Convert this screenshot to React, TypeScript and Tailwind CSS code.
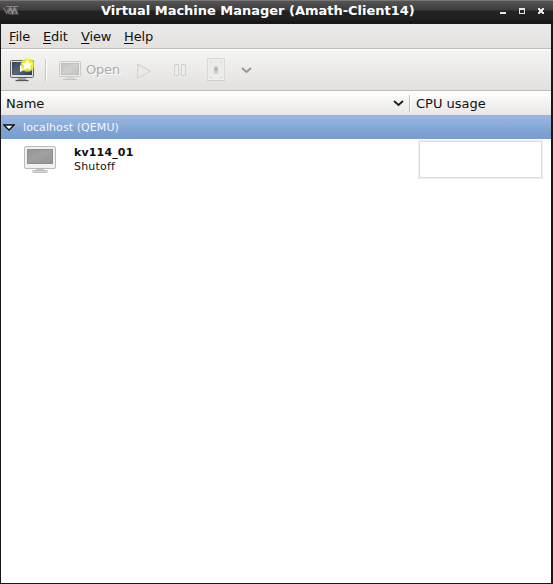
import type { ReactNode } from 'react';

function VmmLogo() {
  return (
    <svg width="18" height="12" viewBox="0 0 18 12" fill="none">
      <path d="M.5 2.5L3.5 8L6 2.5" stroke="#7c6468" strokeWidth="1.6" />
      <path d="M5 8.5L7.5 3L9.5 8L11.5 3L14 8.5" stroke="#8a8a8a" strokeWidth="1.6" />
      <path d="M3 1.5H15.5M6 8.8H15.5" stroke="#858585" strokeWidth="1" />
      <path d="M6 3H14L15 8H7Z" fill="#8a8a8a" fillOpacity=".4" />
    </svg>
  );
}

function TitleBar() {
  return (
    <header className="flex h-6 w-full shrink-0 items-start border-t border-[#777] bg-[linear-gradient(#555_0px,#3c3c3c_9px,#232323_10px,#1f1f1f_19px,#171717_20px)]">
      <div className="mt-[4px] ml-[3px] w-[98px]"><VmmLogo /></div>
      <h1 className="w-[316px] whitespace-nowrap text-[13px] leading-[19px] font-bold tracking-[-0.02px] text-white">Virtual Machine Manager (Amath-Client14)</h1>
      <svg className="mt-[5px] ml-[83px]" width="46" height="10" viewBox="0 0 46 10" shapeRendering="crispEdges">
        <path d="M0 6H6V8H0Z" fill="#e4e4e0" />
        <path d="M19 2H25V8H19ZM20 4V7H24V4Z" fill="#e4e4e0" fillRule="evenodd" />
        <path d="M38 2H40V3H42V2H44V4H43V6H44V8H42V7H40V8H38V6H39V4H38Z" fill="#e4e4e0" />
      </svg>
    </header>
  );
}

function MenuItem({ children, className }: { children: string; className: string }) {
  return (
    <button className={`${className} text-left`}>
      <span className="underline decoration-1 underline-offset-2">{children[0]}</span>{children.slice(1)}
    </button>
  );
}

function NewMachineIcon() {
  return (
    <svg width="26" height="26" viewBox="0 0 26 26">
      <defs>
        <linearGradient id="newScreen" x1="0" y1="0" x2="1" y2="1"><stop stopColor="#35435a" /><stop offset=".5" stopColor="#5a6678" /><stop offset="1" stopColor="#2c3951" /></linearGradient>
        <radialGradient id="glow"><stop offset=".55" stopColor="#f4ef1e" /><stop offset=".8" stopColor="#f2ed39" stopOpacity=".8" /><stop offset="1" stopColor="#f2ed39" stopOpacity="0" /></radialGradient>
      </defs>
      <rect x="1.5" y="3.5" width="23" height="17" rx="1" fill="#dedfd9" stroke="#62645f" />
      <rect x="3" y="5" width="20" height="13" fill="url(#newScreen)" />
      <path d="M9 21H17V23H9Z" fill="#a5a7a2" />
      <path d="M6.500 23.500H19.500" stroke="#555753" strokeWidth="1.300" />
      <path d="M11 8L17 12L11 15Z" fill="#fff" />
      <circle cx="18.500" cy="8" r="7.500" fill="url(#glow)" />
      <path d="M18.500 2.500L20 6H24L21 8.800L22 13L18 11L14.500 13L15.200 9L12.500 6H16.500Z" fill="#fffff4" />
    </svg>
  );
}

function MonitorIcon({ small = false }: { small?: boolean }) {
  return small ? (
    <svg width="22" height="20" viewBox="0 0 22 20">
      <defs><linearGradient id="openScreen" x2="1" y2="1"><stop stopColor="#c4c4c3" /><stop offset=".5" stopColor="#d0d0ce" /><stop offset="1" stopColor="#c1c1c0" /></linearGradient></defs>
      <rect x=".5" y=".5" width="21" height="15" rx="1" fill="#ededeb" stroke="#cbcbc9" />
      <rect x="2.500" y="2.500" width="17" height="11" fill="url(#openScreen)" stroke="#c0c0be" />
      <path d="M7 16H15V18H7Z" fill="#d6d6d4" />
      <path d="M4 18.500H18" stroke="#c2c2c0" />
    </svg>
  ) : (
    <svg width="32" height="28" viewBox="0 0 32 28">
      <defs><linearGradient id="offScreen" x2=".7" y2="1"><stop stopColor="#929292" /><stop offset=".5" stopColor="#a1a1a1" /><stop offset="1" stopColor="#969696" /></linearGradient></defs>
      <rect x=".5" y=".5" width="31" height="22" rx="1.500" fill="#f1f1f0" stroke="#b9b9b8" />
      <rect x="3.500" y="3.500" width="25" height="14" fill="url(#offScreen)" stroke="#8e8e8e" />
      <path d="M12 23H20V25H12Z" fill="#c4c4c3" />
      <rect x="8.500" y="24.500" width="15" height="2" rx="1" fill="#d6d6d5" stroke="#b1b1b0" strokeWidth=".7" />
    </svg>
  );
}

function Chevron({ color }: { color: string }) {
  return <svg width="11" height="7" viewBox="0 0 11 7" fill="none"><path d="M1 1L5.500 5L10 1" stroke={color} strokeWidth="1.800" /></svg>;
}

function ToolButton({ children, className }: { children: ReactNode; className: string }) {
  return <button disabled className={`shrink-0 ${className}`}>{children}</button>;
}

function Toolbar() {
  return (
    <div className="flex h-[41px] shrink-0 items-start border-t border-white bg-linear-to-b from-[#f5f5f4] to-[#e2e1df]">
      <button className="mt-[7px] ml-2"><NewMachineIcon /></button>
      <div className="mt-[9px] ml-[10px] h-[22px] w-[2px] border-r border-l border-r-white border-l-[#c7c5c2]" />
      <ToolButton className="mt-[11px] ml-[12px]"><MonitorIcon small /></ToolButton>
      <span className="ml-[5px] w-[50px] text-[13px] leading-[40px] tracking-[-0.2px] text-[#acaaa6] [text-shadow:1px_1px_#fff]">Open</span>
      <ToolButton className="mt-[13px] ml-px">
        <svg width="15" height="16" viewBox="0 0 15 16"><path d="M.7 1V15L13.500 8Z" fill="#eaeae8" stroke="#cececb" /></svg>
      </ToolButton>
      <ToolButton className="mt-[14px] ml-[22px]">
        <svg width="13" height="13" viewBox="0 0 13 13"><path d="M.5 .5H4.500V11.500H.5ZM7.500 .5H11.500V11.500H7.500Z" fill="#ededeb" stroke="#d0d0cd" /></svg>
      </ToolButton>
      <ToolButton className="mt-[8px] ml-[20px]">
        <svg width="18" height="24" viewBox="0 0 18 24">
          <rect x=".5" y=".5" width="17" height="22" fill="#ececea" stroke="#dad9d6" />
          <path d="M0 22.500H18" stroke="#d0cfcc" />
          <path d="M3 4.500H5M13 4.500H15M3 19.500H5M13 19.500H15" stroke="#d3d3d0" />
          <rect x="7.500" y="8.500" width="3" height="7" rx=".5" fill="#d7d7d5" stroke="#c8c8c6" />
          <path d="M8 10H10V13H8Z" fill="#b1b1af" />
        </svg>
      </ToolButton>
      <button className="mt-[17px] ml-[16px]"><Chevron color="#96938e" /></button>
    </div>
  );
}

export default function App() {
  return (
    <div className="flex h-[584px] w-[553px] flex-col overflow-hidden bg-[#171717] font-['DejaVu_Sans',sans-serif] text-[13px] leading-none text-[#111]">
      <TitleBar />
      <main className="mr-[2px] mb-px ml-px flex min-h-0 flex-1 flex-col bg-white">
        <nav className="flex h-[25px] shrink-0 items-center border-b border-[#bebcb9] bg-linear-to-b from-[#ebeae8] to-[#e2e1df] pl-2 tracking-[-0.15px]">
          <MenuItem className="w-[34px]">File</MenuItem>
          <MenuItem className="w-[38px]">Edit</MenuItem>
          <MenuItem className="w-[43px]">View</MenuItem>
          <MenuItem className="w-10">Help</MenuItem>
        </nav>
        <Toolbar />
        <div className="flex h-[26px] shrink-0 items-center border-t border-b border-t-[#bebcb9] border-b-[#b2afa9] bg-linear-to-b from-white to-[#e8e7e5]">
          <div className="flex h-full w-[408px] items-center pl-[5px]">
            <span className="flex-1">Name</span>
            <span className="mr-[5px]"><Chevron color="#1c1c1c" /></span>
          </div>
          <div className="h-[17px] w-[2px] border-r border-l border-r-white border-l-[#c2c0bd]" />
          <span className="ml-[5px]">CPU usage</span>
        </div>
        <div className="flex h-[23px] shrink-0 items-center bg-[linear-gradient(#98b7e1_0px,#89aad8_11px,#81a5d5_12px,#789dce_23px)] pl-[2px] text-[11px] text-[#f4f7ff]">
          <svg width="12" height="7" viewBox="0 0 12 7"><path d="M1 1H11L6 6Z" fill="white" stroke="#111" strokeWidth="1.300" /></svg>
          <span className="ml-2 tracking-[0.08px]">localhost (QEMU)</span>
        </div>
        <div className="flex h-[40px] shrink-0 items-start">
          <div className="mt-[7px] ml-[23px] w-[50px]"><MonitorIcon /></div>
          <div className="mt-[7px] w-[344px] text-[11px] leading-[14px]"><div className="font-bold tracking-[0.15px]">kv114_01</div><div className="tracking-[0.2px]">Shutoff</div></div>
          <div className="mt-px h-[39px] w-[125px] border border-[#eee] bg-white"><div className="h-full w-full border border-[#dedede]" /></div>
        </div>
      </main>
    </div>
  );
}
